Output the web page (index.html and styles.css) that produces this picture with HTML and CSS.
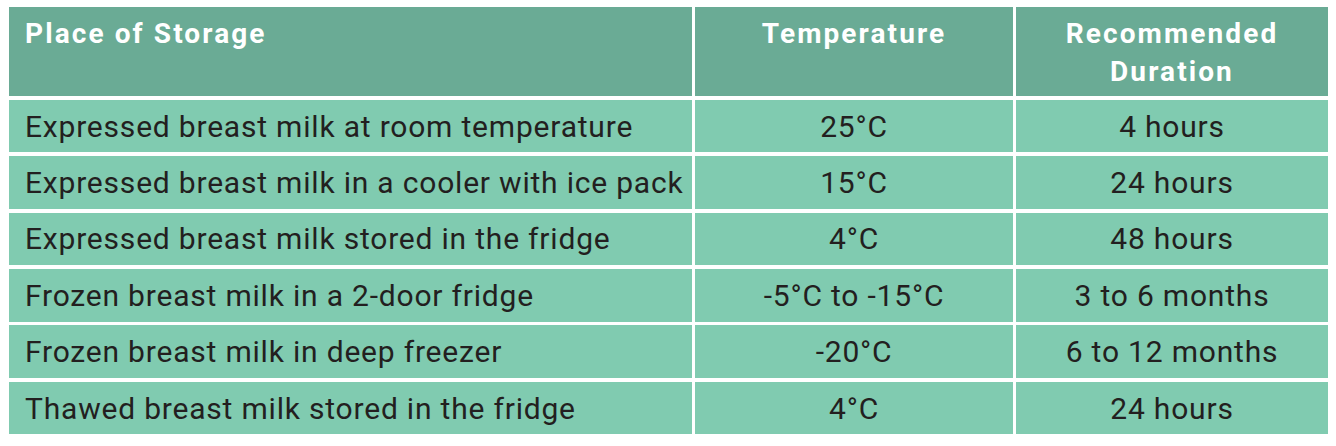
FILE: index.html
```html
<!DOCTYPE html>
<html>
<head>
<meta charset="utf-8">
<link rel="stylesheet" href="styles.css">
</head>
<body>
<div class="table">
  <div class="cell head left">Place of Storage</div>
  <div class="cell head">Temperature</div>
  <div class="cell head">Recommended<br>Duration</div>

  <div class="cell left">Expressed breast milk at room temperature</div>
  <div class="cell">25°C</div>
  <div class="cell">4 hours</div>

  <div class="cell left">Expressed breast milk in a cooler with ice pack</div>
  <div class="cell">15°C</div>
  <div class="cell">24 hours</div>

  <div class="cell left">Expressed breast milk stored in the fridge</div>
  <div class="cell">4°C</div>
  <div class="cell">48 hours</div>

  <div class="cell left">Frozen breast milk in a 2-door fridge</div>
  <div class="cell">-5°C to -15°C</div>
  <div class="cell">3 to 6 months</div>

  <div class="cell left">Frozen breast milk in deep freezer</div>
  <div class="cell">-20°C</div>
  <div class="cell">6 to 12 months</div>

  <div class="cell left">Thawed breast milk stored in the fridge</div>
  <div class="cell">4°C</div>
  <div class="cell">24 hours</div>
</div>
</body>
</html>
```

FILE: styles.css
```css
html, body {
  margin: 0;
  padding: 0;
  background: #ffffff;
}
body {
  padding: 7px 8px 0 9px;
  font-family: Roboto, "Liberation Sans", sans-serif;
}
.table {
  display: grid;
  grid-template-columns: 683px 318px 312px;
  grid-template-rows: 89px repeat(6, 52.6px);
  column-gap: 3px;
  row-gap: 3.8px;
  width: 1319px;
}
.cell {
  background: #80cbb0;
  color: #231f20;
  font-size: 30px;
  letter-spacing: 0.8px;
  display: flex;
  align-items: center;
  justify-content: center;
  text-align: center;
  padding: 0 16px;
  white-space: nowrap;
}
.cell.left {
  justify-content: flex-start;
  text-align: left;
}
.cell.head {
  background: #6aab95;
  color: #ffffff;
  font-weight: bold;
  font-size: 28px;
  letter-spacing: 2.1px;
  align-items: flex-start;
  line-height: 38px;
  padding-top: 8px;
}
```
